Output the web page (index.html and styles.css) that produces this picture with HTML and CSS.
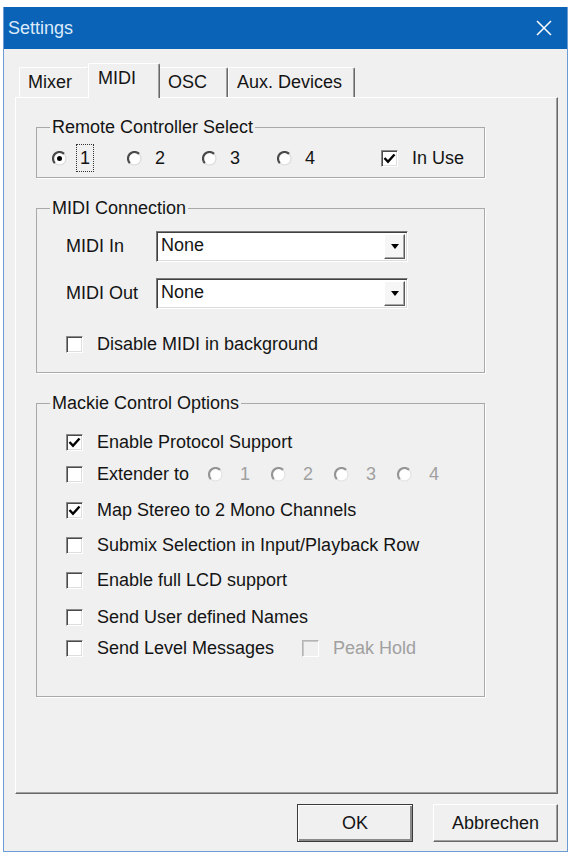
FILE: index.html
```html
<!DOCTYPE html>
<html lang="de">
<head>
  <meta charset="UTF-8" />
  <title>Settings</title>
  <link rel="stylesheet" href="styles.css">
</head>
<body>
  <svg class="defs" width="0" height="0">
    <symbol id="radio" viewBox="0 0 15 15">
      <circle cx="7.5" cy="7.5" r="6.5" fill="#fff"/>
      <path d="M2.9 12.1 A6.5 6.5 0 0 1 12.1 2.9" fill="none" stroke="#4a4a4a" stroke-width="2.2"/>
      <path d="M12.1 2.9 A6.5 6.5 0 0 1 2.9 12.1" fill="none" stroke="#dadada" stroke-width="1.2"/>
    </symbol>
    <symbol id="radio-on" viewBox="0 0 15 15">
      <circle cx="7.5" cy="7.5" r="6.5" fill="#fff"/>
      <path d="M2.9 12.1 A6.5 6.5 0 0 1 12.1 2.9" fill="none" stroke="#4a4a4a" stroke-width="2.2"/>
      <path d="M12.1 2.9 A6.5 6.5 0 0 1 2.9 12.1" fill="none" stroke="#dadada" stroke-width="1.2"/>
      <circle cx="7.5" cy="7.5" r="2.5" fill="#000"/>
    </symbol>
    <symbol id="radio-off" viewBox="0 0 15 15">
      <circle cx="7.5" cy="7.5" r="6.5" fill="#fff"/>
      <path d="M2.9 12.1 A6.5 6.5 0 0 1 12.1 2.9" fill="none" stroke="#959595" stroke-width="2.2"/>
      <path d="M12.1 2.9 A6.5 6.5 0 0 1 2.9 12.1" fill="none" stroke="#e2e2e2" stroke-width="1.2"/>
    </symbol>
    <symbol id="tick" viewBox="0 0 15 15">
      <polyline points="2.5,7 6,10.8 12.5,3.5" fill="none" stroke="#000" stroke-width="2.4"/>
    </symbol>
  </svg>

  <div class="window">
    <!-- Titelleiste -->
    <div class="titlebar">
      <span class="title">Settings</span>
      <svg class="close" width="16" height="16" viewBox="0 0 16 16">
        <path d="M1 1L15 15M15 1L1 15" stroke="#fff" stroke-width="1.5"/>
      </svg>
    </div>

    <div class="client">
      <!-- Reiter -->
      <div class="tabs">
        <div class="tab tab-mixer">Mixer</div>
        <div class="tab tab-midi active">MIDI</div>
        <div class="tab tab-osc">OSC</div>
        <div class="tab tab-aux">Aux. Devices</div>
      </div>

      <div class="panel">
        <fieldset class="group group-remote">
          <legend>Remote Controller Select</legend>
          <div class="row remote-row">
            <span class="radio-item">
              <svg class="radio focus-radio"><use href="#radio-on"/></svg>
              <span class="focus">1</span>
            </span>
            <span class="radio-item"><svg class="radio"><use href="#radio"/></svg>2</span>
            <span class="radio-item"><svg class="radio"><use href="#radio"/></svg>3</span>
            <span class="radio-item"><svg class="radio"><use href="#radio"/></svg>4</span>
            <span class="check-item in-use">
              <span class="check"><svg><use href="#tick"/></svg></span>In Use
            </span>
          </div>
        </fieldset>

        <fieldset class="group group-midi">
          <legend>MIDI Connection</legend>
          <div class="row port-row">
            <span class="port-label">MIDI In</span>
            <div class="combo">
              <span class="combo-text">None</span>
              <span class="combo-btn"><span class="arrow"></span></span>
            </div>
          </div>
          <div class="row port-row port-out">
            <span class="port-label">MIDI Out</span>
            <div class="combo">
              <span class="combo-text">None</span>
              <span class="combo-btn"><span class="arrow"></span></span>
            </div>
          </div>
          <div class="row opt-bg">
            <span class="check"></span>Disable MIDI in background
          </div>
        </fieldset>

        <fieldset class="group group-mackie">
          <legend>Mackie Control Options</legend>
          <div class="row opt opt-first">
            <span class="check"><svg><use href="#tick"/></svg></span>Enable Protocol Support
          </div>
          <div class="row opt opt-ext">
            <span class="check"></span><span class="ext-label">Extender to</span>
            <span class="ext-item"><svg class="radio"><use href="#radio-off"/></svg>1</span>
            <span class="ext-item"><svg class="radio"><use href="#radio-off"/></svg>2</span>
            <span class="ext-item"><svg class="radio"><use href="#radio-off"/></svg>3</span>
            <span class="ext-item"><svg class="radio"><use href="#radio-off"/></svg>4</span>
          </div>
          <div class="row opt opt-map">
            <span class="check"><svg><use href="#tick"/></svg></span>Map Stereo to 2 Mono Channels
          </div>
          <div class="row opt">
            <span class="check"></span>Submix Selection in Input/Playback Row
          </div>
          <div class="row opt opt-lcd">
            <span class="check"></span>Enable full LCD support
          </div>
          <div class="row opt opt-names">
            <span class="check"></span>Send User defined Names
          </div>
          <div class="row opt opt-level">
            <span class="check"></span><span class="level-label">Send Level Messages</span>
            <span class="check check-off"></span><span class="muted">Peak Hold</span>
          </div>
        </fieldset>
      </div>

      <div class="buttons">
        <button class="btn btn-ok">OK</button>
        <button class="btn btn-cancel">Abbrechen</button>
      </div>
    </div>
  </div>
</body>
</html>
```

FILE: styles.css
```css
* { box-sizing: border-box; }
body {
  margin: 0;
  background: #fff;
  font-family: "Liberation Sans", Arial, sans-serif;
  font-size: 18px;
  color: #141414;
}
.defs { display: block; }

/* Fenster */
.window {
  width: 565px;
  height: 845px;
  margin: 7px 0 0 3px;
  border: 1px solid #6d9bd4;
  border-top: 0;
  background: #f0f0f0;
  display: flex;
  flex-direction: column;
}
.titlebar {
  height: 42px;
  background: #0a63b6;
  color: #dceafa;
  display: flex;
  align-items: center;
  justify-content: space-between;
  padding: 0 15px 0 4px;
}
.title { font-size: 18px; }
.close { display: block; }

.client {
  flex: 1;
  padding: 14px 9px 0 11px;
}

/* Reiter */
.tabs {
  display: flex;
  align-items: flex-end;
  height: 34px;
  padding-left: 4px;
}
.tab {
  height: 30px;
  background: #f0f0f0;
  border: 1px solid;
  border-color: #fff #696969 transparent #fff;
  border-bottom: 0;
  border-radius: 2px 2px 0 0;
  box-shadow: inset -1px 0 0 #a0a0a0;
  display: flex;
  align-items: center;
  padding: 0 8px;
}
.tab-mixer { width: 71px; }
.tab-midi { width: 72px; }
.tab-osc { width: 70px; padding-left: 9px; }
.tab-aux { width: 127px; }
.tab.active {
  height: 35px;
  margin: 0 -2px -1px;
  padding: 0 9px 6px;
  position: relative;
  z-index: 1;
}

.panel {
  height: 697px;
  border: 1px solid;
  border-color: #fff #696969 #696969 #fff;
  box-shadow: inset -1px -1px 0 #a0a0a0;
  padding: 19px 0 0 20px;
}

/* Gruppen */
.group {
  width: 449px;
  margin: 0 0 20px;
  padding: 0;
  border: 1px solid #a9a9a9;
  box-shadow: 1px 1px 0 #fff;
}
.group legend {
  margin-left: 13px;
  padding: 0 2px;
  line-height: 20px;
}
.row {
  display: flex;
  align-items: center;
  height: 26px;
  white-space: nowrap;
}

/* Remote Controller Select */
.group-remote { padding: 8px 0 6px; }
.group-remote .row { padding-left: 15px; }
.radio-item {
  width: 75px;
  display: flex;
  align-items: center;
}
.radio {
  width: 15px;
  height: 15px;
  margin-right: 13px;
  flex: none;
}
.focus-radio { margin-right: 10px; }
.focus {
  outline: 1px dotted #333;
  padding: 3px 3px;
  line-height: 20px;
}
.check-item { display: flex; align-items: center; }
.in-use { margin-left: 29px; }

/* Kontrollkaestchen */
.check {
  width: 17px;
  height: 17px;
  flex: none;
  margin-right: 14px;
  background: #fff;
  border: 1px solid;
  border-color: #8a8a8a #fff #fff #8a8a8a;
  box-shadow: inset 1px 1px 0 #4a4a4a, inset -1px -1px 0 #dedede;
  display: flex;
  align-items: center;
  justify-content: center;
}
.check svg { width: 15px; height: 15px; }
.check-off {
  background: #f0f0f0;
  border-color: #b4b4b4 #fff #fff #b4b4b4;
  box-shadow: inset 1px 1px 0 #c8c8c8;
}

/* MIDI Connection */
.group-midi { padding: 13px 0 16px; }
.group-midi .row { padding-left: 29px; }
.port-row { height: 31px; }
.port-out { margin-top: 16px; }
.port-label { width: 90px; }
.combo {
  width: 252px;
  height: 31px;
  background: #fff;
  border: 1px solid;
  border-color: #7a7a7a #fff #fff #7a7a7a;
  box-shadow: inset 1px 1px 0 #404040, inset -1px -1px 0 #dcdcdc;
  display: flex;
  align-items: stretch;
  padding: 2px;
}
.combo-text {
  flex: 1;
  padding: 0 0 0 2px;
  line-height: 22px;
}
.combo-btn {
  width: 21px;
  background: #f6f6f6;
  border: 1px solid;
  border-color: #fff #5a5a5a #5a5a5a #fff;
  box-shadow: inset -1px -1px 0 #a8a8a8;
  display: flex;
  align-items: center;
  justify-content: center;
}
.arrow {
  width: 0;
  height: 0;
  border-left: 4px solid transparent;
  border-right: 4px solid transparent;
  border-top: 5px solid #000;
}
.opt-bg { height: 24px; margin-top: 23px; }

/* Mackie Control Options */
.group-mackie { padding: 16px 0 35px; }
.group-mackie .row { padding-left: 29px; }
.opt { margin-top: 9px; }
.opt-first { margin-top: 0; }
.opt-ext { margin-top: 6px; }
.opt-map { margin-top: 10px; }
.opt-lcd { margin-top: 9px; }
.opt-names { margin-top: 11px; }
.opt-level { margin-top: 5px; }
.ext-label { width: 111px; }
.ext-item {
  width: 63px;
  display: flex;
  align-items: center;
  color: #a0a0a0;
}
.ext-item .radio { margin-right: 17px; }
.level-label { width: 205px; }
.muted { color: #a0a0a0; }

/* Schaltflaechen */
.buttons {
  display: flex;
  justify-content: flex-end;
  gap: 20px;
  margin-top: 10px;
}
.btn {
  height: 38px;
  font-family: inherit;
  font-size: 18px;
  color: #141414;
  background: #f0f0f0;
  border: 1px solid;
  border-color: #fff #696969 #696969 #fff;
  box-shadow: inset -1px -1px 0 #a0a0a0;
  padding: 0;
}
.btn-ok {
  width: 116px;
  border-color: #3a3a3a;
  box-shadow: inset 1px 1px 0 #fff, inset -2px -2px 0 #8a8a8a;
}
.btn-cancel { width: 125px; }
```
